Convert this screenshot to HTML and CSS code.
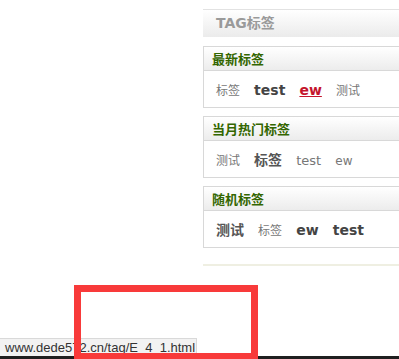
FILE: index.html
```html
<!DOCTYPE html>
<html lang="zh-CN">
  <head>
    <meta charset="UTF-8" />
    <title>TAG标签</title>
    <link rel="stylesheet" href="styles.css">
  </head>
  <body>
    <div class="side">
      <div class="side-title">TAG标签</div>

      <div class="box">
        <div class="box-hd">最新标签</div>
        <div class="box-bd">
          <a class="tag small">标签</a>
          <a class="tag big">test</a>
          <a class="tag big hover">ew</a>
          <a class="tag small">测试</a>
        </div>
      </div>

      <div class="box">
        <div class="box-hd">当月热门标签</div>
        <div class="box-bd">
          <a class="tag small">测试</a>
          <a class="tag mid">标签</a>
          <a class="tag plain">test</a>
          <a class="tag plain sm">ew</a>
        </div>
      </div>

      <div class="box">
        <div class="box-hd">随机标签</div>
        <div class="box-bd">
          <a class="tag mid">测试</a>
          <a class="tag small">标签</a>
          <a class="tag big">ew</a>
          <a class="tag big">test</a>
        </div>
      </div>

      <div class="side-end"></div>
    </div>

    <!-- barra de status do navegador + marcação -->
    <div class="statusbar">www.dede572.cn/tag/E_4_1.html</div>
    <div class="window-edge"></div>
    <div class="mark"></div>
  </body>
</html>
```

FILE: styles.css
```css
html,
body {
  margin: 0;
  height: 100%;
  overflow: hidden;
  background: #fff;
}

body {
  font-family: "DejaVu Sans", "Noto Sans CJK SC", sans-serif;
}

.side {
  width: 240px;
  margin: 9px 0 0 203px;
}

.side-title {
  height: 27px;
  line-height: 27px;
  border-top: 1px solid #e2e2e2;
  background: linear-gradient(#fff, #ebebeb);
  padding-left: 13px;
  font-size: 14px;
  font-weight: bold;
  color: #9a9a9a;
}

.box {
  border: 1px solid #d8d8d8;
  margin-top: 8px;
}

.side-title + .box {
  margin-top: 9px;
}

.box-hd {
  height: 23px;
  line-height: 24px;
  border-bottom: 1px solid #d8d8d8;
  background: linear-gradient(#fff, #ececec);
  padding-left: 8px;
  font-size: 13px;
  font-weight: bold;
  color: #336600;
  font-family: "Noto Sans CJK SC", sans-serif;
}

.box-bd {
  height: 36px;
  line-height: 37px;
  padding-left: 12px;
  white-space: nowrap;
}

.tag {
  margin-right: 9px;
  color: #666;
}

.small {
  font-size: 12px;
  color: #777;
  font-family: "Noto Sans CJK SC", sans-serif;
}

.mid {
  font-size: 14px;
  font-weight: bold;
  color: #555;
}

.big {
  font-size: 14px;
  font-weight: bold;
  color: #444;
}

.plain {
  font-size: 13px;
  color: #777;
}

.plain.sm {
  font-size: 12px;
}

.hover {
  color: #c4142c;
  text-decoration: underline;
}

.side-end {
  margin-top: 16px;
  border-top: 2px solid #efefe2;
}

.statusbar {
  position: fixed;
  left: 0;
  bottom: 3px;
  height: 17px;
  line-height: 18px;
  padding: 0 3px 0 5px;
  width: 188px;
  background: #f2f2f2;
  border-top: 1px solid #d9d9d9;
  border-right: 1px solid #d9d9d9;
  font-family: "Liberation Sans", sans-serif;
  font-size: 13px;
  color: #333;
  overflow: hidden;
}

.window-edge {
  position: fixed;
  left: 0;
  right: 0;
  bottom: 0;
  height: 3px;
  background: #1f1f1f;
}

.mark {
  position: fixed;
  left: 74px;
  top: 285px;
  width: 170px;
  height: 61px;
  border: 7px solid #f83a3a;
}
```
